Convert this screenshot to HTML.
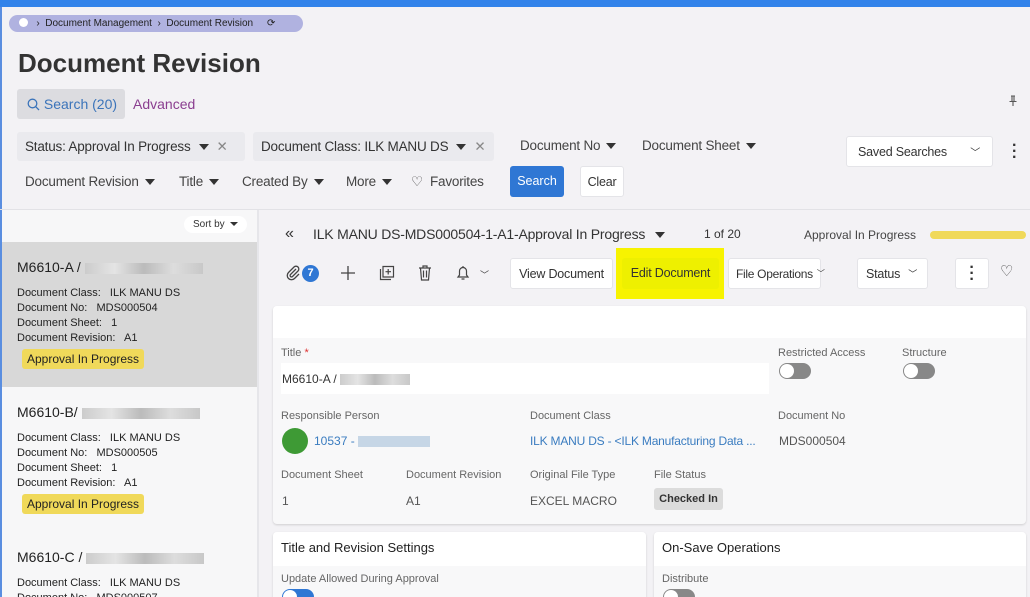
<!DOCTYPE html>
<html><head><meta charset="utf-8"><style>
*{box-sizing:border-box;margin:0;padding:0}
html,body{width:1030px;height:597px;overflow:hidden}
body{background:#f3f2f5;font-family:"Liberation Sans",sans-serif;color:#333;position:relative;font-size:13px}
.a{position:absolute;white-space:nowrap}
.caret{display:inline-block;width:0;height:0;border-left:5px solid transparent;border-right:5px solid transparent;border-top:6px solid #333;vertical-align:middle;margin-left:6px}
.btn{position:absolute;background:#fff;border:1px solid #e4e4e8;border-radius:3px;font-size:12.5px;display:flex;align-items:center;justify-content:center;white-space:nowrap;letter-spacing:-.2px}
.lbl{position:absolute;font-size:11px;color:#666;white-space:nowrap}
.val{position:absolute;font-size:12px;color:#555;white-space:nowrap}
.blur{display:inline-block;height:11px;background:linear-gradient(90deg,#ccc,#e4e4e4,#bbb,#ddd,#c8c8c8);vertical-align:middle}
.tog{position:absolute;width:32px;height:16px;border-radius:8px;background:#888}
.tog:after{content:"";position:absolute;left:1px;top:1px;width:14px;height:14px;border-radius:50%;background:#fff}
.badge{position:absolute;background:#f0d95a;border-radius:3px;font-size:12px;color:#222;padding:3px 5px}
.f{font-size:13.5px;color:#444;letter-spacing:-.2px}
</style></head><body>
<div class="a" style="left:0;top:0;width:1030px;height:7px;background:#3283ea"></div>
<div class="a" style="left:0;top:7px;width:2px;height:590px;background:#5a8ee0"></div>
<div class="a" style="left:9px;top:15px;width:294px;height:17px;border-radius:9px;background:#b0b2e0;font-size:10px;color:#222;line-height:17px;padding-left:10px"><span style="display:inline-block;width:9px;height:9px;border-radius:50%;background:#fff;vertical-align:-1px"></span>&nbsp;&nbsp; ›&nbsp; Document Management&nbsp; ›&nbsp; Document Revision&nbsp;&nbsp;&nbsp;&nbsp; ⟳</div>
<div class="a" style="left:18px;top:48px;font-size:26px;font-weight:bold;color:#333">Document Revision</div>
<div class="a" style="left:17px;top:89px;width:108px;height:30px;background:#dcdce0;border-radius:3px;color:#3b74ba;font-size:14px;line-height:30px;padding-left:10px"><svg width="13" height="13" viewBox="0 0 13 13" style="vertical-align:-2px"><circle cx="5.5" cy="5.5" r="4.3" fill="none" stroke="#3b74ba" stroke-width="1.3"/><path d="M8.6 8.6L12 12" stroke="#3b74ba" stroke-width="1.3"/></svg> Search (20)</div>
<div class="a" style="left:133px;top:96px;font-size:14px;color:#8a3e90">Advanced</div>
<div class="a f" style="left:17px;top:132px;width:228px;height:29px;background:#eaeaee;border-radius:3px;line-height:29px;padding-left:8px;color:#333">Status: Approval In Progress<span class="caret" style="margin-left:8px"></span><span style="margin-left:8px;color:#888">✕</span></div>
<div class="a f" style="left:253px;top:132px;width:241px;height:29px;background:#eaeaee;border-radius:3px;line-height:29px;padding-left:8px;color:#333">Document Class: ILK MANU DS<span class="caret" style="margin-left:8px"></span><span style="margin-left:8px;color:#888">✕</span></div>
<div class="a f" style="left:520px;top:138px">Document No<span class="caret"></span></div>
<div class="a f" style="left:642px;top:138px">Document Sheet<span class="caret"></span></div>
<div class="btn" style="left:846px;top:136px;width:147px;height:31px;justify-content:flex-start;padding-left:11px;font-size:12.5px">Saved Searches<span style="position:absolute;right:12px;font-size:10px">﹀</span></div>
<div class="a" style="left:1012px;top:143px;font-size:16px;font-weight:bold;line-height:6px">·<br>·<br>·</div>
<div class="a f" style="left:25px;top:174px">Document Revision<span class="caret"></span></div>
<div class="a f" style="left:179px;top:174px">Title<span class="caret"></span></div>
<div class="a f" style="left:242px;top:174px">Created By<span class="caret"></span></div>
<div class="a f" style="left:346px;top:174px">More<span class="caret"></span></div>
<div class="a f" style="left:411px;top:174px">♡&nbsp; Favorites</div>
<div class="a" style="left:510px;top:166px;width:54px;height:31px;background:#2f77d4;border-radius:3px;color:#fff;font-size:12.5px;line-height:31px;text-align:center">Search</div>
<div class="btn" style="left:580px;top:166px;width:44px;height:31px">Clear</div>
<div class="a" style="left:0;top:209px;width:1030px;height:1px;background:#e2e2e6"></div>
<div class="a" style="left:2px;top:210px;width:255px;height:387px;background:#f7f7f8"></div>
<div class="a" style="left:257px;top:210px;width:2px;height:387px;background:#e6e6ea"></div>
<div class="a" style="left:184px;top:216px;width:63px;height:17px;background:#fff;border-radius:9px;font-size:10px;line-height:17px;padding-left:9px">Sort by<span class="caret" style="border-width:4px 4px 0;margin-left:5px"></span></div>
<div class="a" style="left:2px;top:242px;width:255px;height:145px;background:#d8d8d8"></div>
<div class="a" style="left:17px;top:259px;font-size:14px;color:#222">M6610-A / <span class="blur" style="width:118px"></span></div>
<div class="a" style="left:17px;top:286px;font-size:11px;line-height:15px;color:#222">Document Class:&nbsp;&nbsp; ILK MANU DS<br>Document No:&nbsp;&nbsp; MDS000504<br>Document Sheet:&nbsp;&nbsp; 1<br>Document Revision:&nbsp;&nbsp; A1</div>
<div class="badge" style="left:22px;top:349px">Approval In Progress</div>
<div class="a" style="left:17px;top:404px;font-size:14px;color:#222">M6610-B/ <span class="blur" style="width:118px"></span></div>
<div class="a" style="left:17px;top:431px;font-size:11px;line-height:15px;color:#222">Document Class:&nbsp;&nbsp; ILK MANU DS<br>Document No:&nbsp;&nbsp; MDS000505<br>Document Sheet:&nbsp;&nbsp; 1<br>Document Revision:&nbsp;&nbsp; A1</div>
<div class="badge" style="left:22px;top:494px">Approval In Progress</div>
<div class="a" style="left:17px;top:549px;font-size:14px;color:#222">M6610-C / <span class="blur" style="width:118px"></span></div>
<div class="a" style="left:17px;top:576px;font-size:11px;line-height:15px;color:#222">Document Class:&nbsp;&nbsp; ILK MANU DS<br>Document No:&nbsp;&nbsp; MDS000507</div>

<div class="a" style="left:285px;top:225px;font-size:16px;color:#333">«</div>
<div class="a" style="left:313px;top:226px;font-size:14px;color:#333;letter-spacing:-.2px">ILK MANU DS-MDS000504-1-A1-Approval In Progress<span class="caret" style="margin-left:10px"></span></div>
<div class="a" style="left:704px;top:227px;font-size:12px;color:#333">1 of 20</div>
<div class="a" style="left:804px;top:228px;font-size:12px;color:#444">Approval In Progress</div>
<div class="a" style="left:930px;top:231px;width:96px;height:8px;border-radius:4px;background:#f0d95a"></div>
<svg class="a" style="left:285px;top:265px" width="16" height="16" viewBox="0 0 16 16"><path d="M11 4L5.5 9.5a1.4 1.4 0 0 0 2 2L13 6a2.8 2.8 0 0 0-4-4L3.5 7.5a4.2 4.2 0 0 0 6 6L14 9" fill="none" stroke="#444" stroke-width="1.3"/></svg>
<div class="a" style="left:302px;top:265px;width:17px;height:17px;border-radius:50%;background:#2f77d4;color:#fff;font-size:11px;font-weight:bold;text-align:center;line-height:17px">7</div>
<svg class="a" style="left:341px;top:266px" width="14" height="14"><path d="M7 0v14M0 7h14" stroke="#444" stroke-width="1.3"/></svg>
<svg class="a" style="left:379px;top:265px" width="16" height="16"><path d="M4 1.5h10.5v10.5H4z M1.5 4v10.5H12" fill="none" stroke="#444" stroke-width="1.2"/><path d="M9.2 4v5.5M6.5 6.7H12" stroke="#444" stroke-width="1.2"/></svg>
<svg class="a" style="left:418px;top:265px" width="14" height="16"><path d="M1 3h12M5 3V1h4v2M2.5 3l1 12h7l1-12M5.5 5.5v7M8.5 5.5v7" fill="none" stroke="#444" stroke-width="1.2"/></svg>
<svg class="a" style="left:456px;top:265px" width="14" height="16"><path d="M2 12h10l-1.5-2V6a3.5 3.5 0 0 0-7 0v4zM5.5 14h3M7 1v1" fill="none" stroke="#444" stroke-width="1.2"/></svg>
<div class="a" style="left:480px;top:268px;font-size:9px;color:#444">﹀</div>
<div class="btn" style="left:510px;top:258px;width:103px;height:31px">View Document</div>
<div class="a" style="left:616px;top:248px;width:108px;height:51px;background:#f7f300"></div>
<div class="a" style="left:622px;top:258px;width:97px;height:31px;background:#eef000;border-radius:3px;font-size:12.5px;line-height:31px;text-align:center;letter-spacing:-.2px">Edit Document</div>
<div class="btn" style="left:728px;top:258px;width:93px;height:31px;justify-content:flex-start;padding-left:7px;font-size:12px;letter-spacing:-.3px">File Operations<span style="font-size:8px;margin-left:4px">﹀</span></div>
<div class="btn" style="left:857px;top:258px;width:71px;height:31px;justify-content:flex-start;padding-left:8px">Status<span style="font-size:9px;margin-left:8px">﹀</span></div>
<div class="btn" style="left:955px;top:258px;width:34px;height:31px;font-weight:bold;font-size:16px;line-height:6px;flex-direction:column">·<br>·<br>·</div>
<div class="a" style="left:1000px;top:262px;font-size:15px;color:#444">♡</div>

<div class="a" style="left:273px;top:306px;width:753px;height:218px;background:#f8f8f9;border-radius:4px;box-shadow:0 1px 2px rgba(0,0,0,.15)"></div>
<div class="a" style="left:273px;top:306px;width:753px;height:32px;background:#fff;border-radius:4px 4px 0 0"></div>
<div class="lbl" style="left:281px;top:347px">Title <span style="color:#d33">*</span></div>
<div class="a" style="left:281px;top:363px;width:488px;height:31px;background:#fff"></div>
<div class="val" style="left:282px;top:372px;color:#333">M6610-A / <span class="blur" style="width:70px"></span></div>
<div class="lbl" style="left:778px;top:347px">Restricted Access</div>
<div class="lbl" style="left:902px;top:347px">Structure</div>
<div class="tog" style="left:779px;top:363px"></div>
<div class="tog" style="left:903px;top:363px"></div>
<div class="lbl" style="left:281px;top:410px">Responsible Person</div>
<div class="lbl" style="left:530px;top:410px">Document Class</div>
<div class="lbl" style="left:778px;top:410px">Document No</div>
<div class="a" style="left:282px;top:428px;width:26px;height:26px;border-radius:50%;background:#3e9a35"></div>
<div class="val" style="left:314px;top:434px;color:#3a7cc0">10537 - <span class="blur" style="width:72px;background:#c6d6e6"></span></div>
<div class="val" style="left:530px;top:434px;color:#3a7cc0;letter-spacing:-.2px">ILK MANU DS - &lt;ILK Manufacturing Data ...</div>
<div class="val" style="left:779px;top:434px">MDS000504</div>
<div class="lbl" style="left:281px;top:469px">Document Sheet</div>
<div class="lbl" style="left:406px;top:469px">Document Revision</div>
<div class="lbl" style="left:530px;top:469px">Original File Type</div>
<div class="lbl" style="left:654px;top:469px">File Status</div>
<div class="val" style="left:282px;top:494px">1</div>
<div class="val" style="left:406px;top:494px">A1</div>
<div class="val" style="left:530px;top:494px">EXCEL MACRO</div>
<div class="a" style="left:654px;top:488px;width:69px;height:22px;background:#dcdcdc;border-radius:3px;font-size:11px;font-weight:bold;line-height:22px;text-align:center;color:#333">Checked In</div>

<div class="a" style="left:273px;top:532px;width:373px;height:70px;background:#f8f8f9;border-radius:4px;box-shadow:0 1px 2px rgba(0,0,0,.15)"></div>
<div class="a" style="left:273px;top:532px;width:373px;height:34px;background:#fff;border-radius:4px 4px 0 0"></div>
<div class="a" style="left:281px;top:540px;font-size:13px;color:#222">Title and Revision Settings</div>
<div class="lbl" style="left:281px;top:573px">Update Allowed During Approval</div>
<div class="tog" style="left:282px;top:589px;background:#2f77d4"></div>
<div class="a" style="left:654px;top:532px;width:372px;height:70px;background:#f8f8f9;border-radius:4px;box-shadow:0 1px 2px rgba(0,0,0,.15)"></div>
<div class="a" style="left:654px;top:532px;width:372px;height:34px;background:#fff;border-radius:4px 4px 0 0"></div>
<div class="a" style="left:662px;top:540px;font-size:13px;color:#222">On-Save Operations</div>
<div class="lbl" style="left:662px;top:573px">Distribute</div>
<div class="tog" style="left:663px;top:589px"></div>
<svg class="a" style="left:1008px;top:95px" width="10" height="12"><path d="M3 1h4M4 1v5M6 1v5M1.5 6.5h7M5 6.5V11" fill="none" stroke="#555" stroke-width="1.1"/></svg>
</body></html>
